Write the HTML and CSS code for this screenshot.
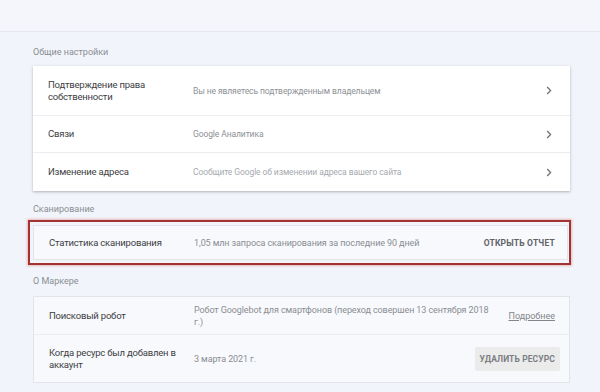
FILE: index.html
```html
<!DOCTYPE html>
<html lang="ru">
<head>
<meta charset="utf-8">
<link rel="stylesheet" href="styles.css">
</head>
<body>
<div class="topbar"></div>
<main class="main">
  <div class="section-title first">Общие настройки</div>
  <div class="card">
    <div class="row r1">
      <div class="label">Подтверждение права<br>собственности</div>
      <div class="value">Вы не являетесь подтвержденным владельцем</div>
      <div class="action"><svg class="chev" width="6" height="9" viewBox="0 0 6 9"><path d="M1.2 1 L4.6 4.5 L1.2 8" fill="none" stroke="#707478" stroke-width="1.3"/></svg></div>
    </div>
    <div class="row r2">
      <div class="label">Связи</div>
      <div class="value">Google Аналитика</div>
      <div class="action"><svg class="chev" width="6" height="9" viewBox="0 0 6 9"><path d="M1.2 1 L4.6 4.5 L1.2 8" fill="none" stroke="#707478" stroke-width="1.3"/></svg></div>
    </div>
    <div class="row r3">
      <div class="label">Изменение адреса</div>
      <div class="value light">Сообщите Google об изменении адреса вашего сайта</div>
      <div class="action"><svg class="chev" width="6" height="9" viewBox="0 0 6 9"><path d="M1.2 1 L4.6 4.5 L1.2 8" fill="none" stroke="#707478" stroke-width="1.3"/></svg></div>
    </div>
  </div>

  <div class="section-title scan">Сканирование</div>
  <div class="highlight">
    <div class="card flat crawl">
      <div class="row rc">
        <div class="label">Статистика сканирования</div>
        <div class="value dark">1,05 млн запроса сканирования за последние 90 дней</div>
        <div class="action"><span class="textbtn">ОТКРЫТЬ ОТЧЕТ</span></div>
      </div>
    </div>
  </div>

  <div class="section-title about">О Маркере</div>
  <div class="card flat">
    <div class="row ra">
      <div class="label">Поисковый робот</div>
      <div class="value dark">Робот Googlebot для смартфонов (переход совершен 13 сентября 2018 г.)</div>
      <div class="action"><span class="link">Подробнее</span></div>
    </div>
    <div class="row rb">
      <div class="label">Когда ресурс был добавлен в<br>аккаунт</div>
      <div class="value dark">3 марта 2021 г.</div>
      <div class="action"><span class="greybtn">УДАЛИТЬ РЕСУРС</span></div>
    </div>
  </div>
</main>
</body>
</html>
```

FILE: styles.css
```css
* { box-sizing: border-box; }
html, body { margin: 0; padding: 0; }
body {
  width: 600px;
  height: 392px;
  overflow: hidden;
  background: #f1f4fa;
  font-family: Roboto, "Noto Sans", sans-serif;
  color: #3c4043;
}
.topbar {
  height: 32px;
  background: #f4f6fb;
  border-bottom: 1px solid #e4e7ee;
}
.main {
  padding: 0 30px 0 33px;
}
.section-title {
  font-size: 9px;
  line-height: 12px;
  color: #8a8e93;
}
.section-title.first { margin-top: 14px; margin-bottom: 8px; }
.section-title.scan { margin-top: 12px; margin-bottom: 5px; }
.section-title.about { margin-top: 10px; margin-bottom: 9px; }
.card {
  background: #fff;
  box-shadow: 0 1px 2px rgba(60,64,67,.25), 0 1px 4px rgba(60,64,67,.12);
}
.card.flat {
  background: #f8f9fc;
  box-shadow: none;
  border: 1px solid #e2e4ea;
}
.row {
  display: flex;
  align-items: center;
  padding: 0 18px 0 15px;
  border-top: 1px solid #ebedf0;
}
.row:first-child { border-top: none; }
.r1 { height: 49px; }
.r2 { height: 37px; }
.r3 { height: 39px; }
.rc { height: 33px; padding-right: 12px; }
.ra { height: 37px; padding-right: 14px; }
.rb { height: 48px; padding-right: 9px; }
.label {
  width: 145px;
  flex: none;
  font-size: 9.5px;
  letter-spacing: -0.2px;
  line-height: 12px;
  color: #3c4043;
}
.value {
  flex: 1;
  font-size: 8.5px;
  letter-spacing: -0.1px;
  line-height: 12px;
  color: #8d9196;
}
.value.light { color: #a6aaaf; }
.value.dark { font-size: 9px; letter-spacing: -0.1px; color: #8a8e93; padding-right: 10px; }
.action {
  flex: none;
  display: flex;
  align-items: center;
}
.chev { display: block; }
.highlight {
  margin: 0 -1px 0 -5px;
  border: 2px solid #a33232;
  padding: 3px 1px 3px 3px;
  box-shadow: 0 0 2px 1px rgba(220,120,120,.45);
}
.crawl {
  border-color: #e6e8ee;
  box-shadow: 0 1px 2px rgba(60,64,67,.12);
}
.textbtn {
  font-size: 8.5px;
  font-weight: 700;
  letter-spacing: 0.2px;
  color: #5f6368;
}
.link {
  font-size: 9px;
  color: #80868b;
  text-decoration: underline;
}
.greybtn {
  display: inline-block;
  background: #ebebec;
  color: #7a7e83;
  font-size: 8.5px;
  font-weight: 700;
  letter-spacing: 0.1px;
  padding: 7px 5px;
  border-radius: 2px;
}
```
